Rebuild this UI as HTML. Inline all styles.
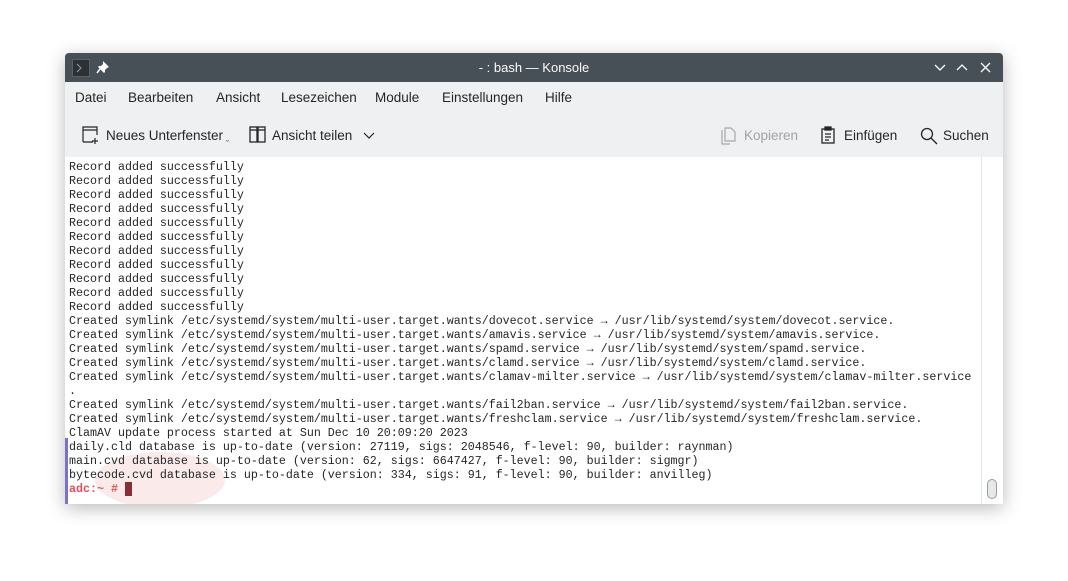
<!DOCTYPE html>
<html><head><meta charset="utf-8"><style>
body{margin:0;width:1068px;height:581px;background:#fff;position:relative;overflow:hidden;font-family:"Liberation Sans",sans-serif}
.win{position:absolute;left:65px;top:53px;width:938px;height:451px;background:#eff0f1;box-shadow:0 4px 18px rgba(0,0,0,.28);border-radius:4px 4px 0 0;overflow:hidden}
.tb{position:absolute;left:0;top:0;width:938px;height:29px;background:#475057;color:#fcfcfc;font-size:13px}
.menu{position:absolute;top:37px;font-size:13.5px;color:#232629}
.tool{position:absolute;top:75px;font-size:13.5px;color:#232629}
.term{position:absolute;left:0;top:104px;width:938px;height:347px;background:#fff}
pre{margin:0;position:absolute;left:4px;top:3px;font-family:"Liberation Mono",monospace;font-size:11.67px;line-height:14px;color:#232629}
</style></head><body>
<div class="win">
 <div class="tb">
  <div style="position:absolute;left:7px;top:6px;width:16px;height:16px;background:#2b3135;border:1px solid #5a6268"></div>
  <svg style="position:absolute;left:11px;top:10px" width="8" height="10" fill="none" stroke="#999" stroke-width="1"><path d="M1 1l4 4-4 4"/></svg>
  <svg style="position:absolute;left:31px;top:7px" width="14" height="14" fill="#fcfcfc"><path d="M7 1l6 6-2 1-2 2 0 2-1 1-6-6 1-1 2 0 2-2z"/><path d="M4 9l-3 4" stroke="#fcfcfc" stroke-width="1.5"/></svg>
  <div style="position:absolute;left:0;width:938px;top:7px;text-align:center">- : bash — Konsole</div>
  <svg style="position:absolute;left:868px;top:8px" width="64" height="14" fill="none" stroke="#fcfcfc" stroke-width="1.3"><path d="M2 4l5 5 5-5M24 9l5-5 5 5M48 2l9 9M57 2l-9 9"/></svg>
 </div>
 <div class="menu" style="left:10px">Datei</div>
 <div class="menu" style="left:63px">Bearbeiten</div>
 <div class="menu" style="left:151px">Ansicht</div>
 <div class="menu" style="left:216px">Lesezeichen</div>
 <div class="menu" style="left:310px">Module</div>
 <div class="menu" style="left:377px">Einstellungen</div>
 <div class="menu" style="left:480px">Hilfe</div>
 <svg style="position:absolute;left:17px;top:73px" width="20" height="20" fill="none" stroke="#232629" stroke-width="1.2"><path d="M1 16V1h14v8M1 16h10M1 4h14M13 12v6M10 15h6"/></svg>
 <div class="tool" style="left:41px">Neues Unterfenster</div>
 <div style="position:absolute;left:161px;top:86px;font-size:9px;color:#232629">ˇ</div>
 <svg style="position:absolute;left:184px;top:73px" width="18" height="18" fill="none" stroke="#232629" stroke-width="1.3"><rect x="1" y="1" width="7" height="15"/><rect x="9" y="1" width="7" height="15"/><path d="M1 4h15"/></svg>
 <div class="tool" style="left:207px">Ansicht teilen</div>
 <svg style="position:absolute;left:298px;top:79px" width="12" height="8" fill="none" stroke="#232629" stroke-width="1.2"><path d="M1 1l5 5 5-5"/></svg>
 <svg style="position:absolute;left:656px;top:74px" width="16" height="18" fill="none" stroke="#a5a8ab" stroke-width="1.2"><path d="M1 3v14h8M4 1h6l4 4v9H4z"/></svg>
 <div class="tool" style="left:679px;color:#a0a3a6">Kopieren</div>
 <svg style="position:absolute;left:756px;top:73px" width="14" height="18" fill="none" stroke="#232629" stroke-width="1.3"><rect x="1" y="3" width="12" height="14"/><rect x="4" y="1" width="6" height="3" fill="#232629"/><path d="M4 8h6M4 11h6M4 14h4"/></svg>
 <div class="tool" style="left:779px">Einfügen</div>
 <svg style="position:absolute;left:855px;top:74px" width="18" height="18" fill="none" stroke="#232629" stroke-width="1.3"><circle cx="7" cy="7" r="5.5"/><path d="M11 11l6 6"/></svg>
 <div class="tool" style="left:878px">Suchen</div>
 <div class="term">
  <div style="position:absolute;left:0;top:281px;width:3px;height:66px;background:#7b72c8"></div>
  <div style="position:absolute;left:30px;top:295px;width:130px;height:56px;border-radius:50%;background:rgba(240,170,170,.25)"></div>
  <div style="position:absolute;left:916px;top:0;width:1px;height:347px;background:#e3e5e7"></div>
  <div style="position:absolute;left:922px;top:322px;width:8px;height:18px;border:1px solid #9a9da0;border-radius:5px;background:#e6e7e8"></div>
<pre>Record added successfully
Record added successfully
Record added successfully
Record added successfully
Record added successfully
Record added successfully
Record added successfully
Record added successfully
Record added successfully
Record added successfully
Record added successfully
Created symlink /etc/systemd/system/multi-user.target.wants/dovecot.service → /usr/lib/systemd/system/dovecot.service.
Created symlink /etc/systemd/system/multi-user.target.wants/amavis.service → /usr/lib/systemd/system/amavis.service.
Created symlink /etc/systemd/system/multi-user.target.wants/spamd.service → /usr/lib/systemd/system/spamd.service.
Created symlink /etc/systemd/system/multi-user.target.wants/clamd.service → /usr/lib/systemd/system/clamd.service.
Created symlink /etc/systemd/system/multi-user.target.wants/clamav-milter.service → /usr/lib/systemd/system/clamav-milter.service
.
Created symlink /etc/systemd/system/multi-user.target.wants/fail2ban.service → /usr/lib/systemd/system/fail2ban.service.
Created symlink /etc/systemd/system/multi-user.target.wants/freshclam.service → /usr/lib/systemd/system/freshclam.service.
ClamAV update process started at Sun Dec 10 20:09:20 2023
daily.cld database is up-to-date (version: 27119, sigs: 2048546, f-level: 90, builder: raynman)
main.cvd database is up-to-date (version: 62, sigs: 6647427, f-level: 90, builder: sigmgr)
bytecode.cvd database is up-to-date (version: 334, sigs: 91, f-level: 90, builder: anvilleg)
<b style="color:#e0505a">adc:~ #</b> <span style="background:#8a2d35">&nbsp;</span></pre>
 </div>
</div>
</body></html>
